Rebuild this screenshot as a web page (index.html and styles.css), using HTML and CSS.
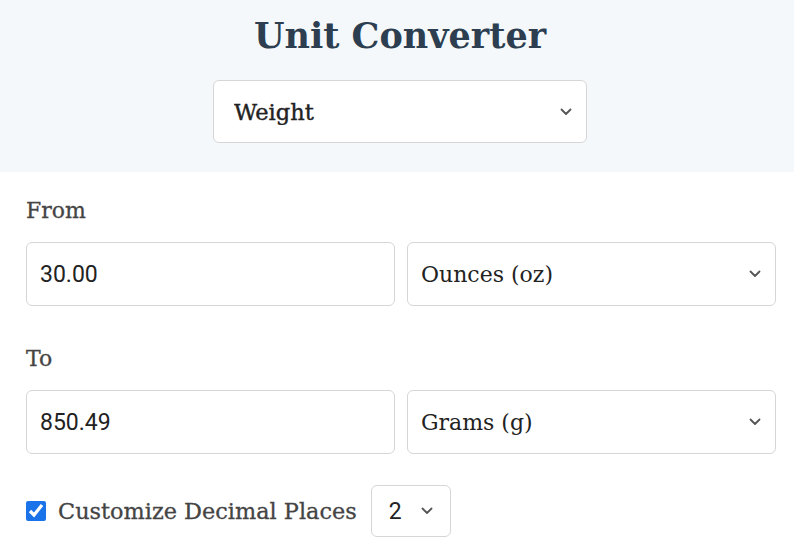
FILE: index.html
```html
<!DOCTYPE html>
<html lang="en">

    <head>
        <meta charset="UTF-8">
        <meta name="viewport" content="width=device-width, initial-scale=1.0">
        <title>Unit Converter</title>
        <link rel="stylesheet" href="styles.css">
    </head>

    <body>
        <div class="header">
            <h1>Unit Converter</h1>
            <div class="select-wrap category">
                <select class="field select">
                    <option>Weight</option>
                </select>
                <svg class="chevron" width="12" height="8" viewBox="0 0 12 8"><path d="M1.5 1.5 L6 6 L10.5 1.5" fill="none" stroke="#555" stroke-width="1.8" stroke-linecap="round" stroke-linejoin="round"/></svg>
            </div>
        </div>

        <div class="content">
            <label class="label">From</label>
            <div class="row">
                <input type="text" class="field number" value="30.00">
                <div class="select-wrap">
                    <select class="field select">
                        <option>Ounces (oz)</option>
                    </select>
                    <svg class="chevron" width="12" height="8" viewBox="0 0 12 8"><path d="M1.5 1.5 L6 6 L10.5 1.5" fill="none" stroke="#555" stroke-width="1.8" stroke-linecap="round" stroke-linejoin="round"/></svg>
                </div>
            </div>

            <label class="label">To</label>
            <div class="row">
                <input type="text" class="field number" value="850.49">
                <div class="select-wrap">
                    <select class="field select">
                        <option>Grams (g)</option>
                    </select>
                    <svg class="chevron" width="12" height="8" viewBox="0 0 12 8"><path d="M1.5 1.5 L6 6 L10.5 1.5" fill="none" stroke="#555" stroke-width="1.8" stroke-linecap="round" stroke-linejoin="round"/></svg>
                </div>
            </div>

            <div class="decimals">
                <input type="checkbox" id="custom" class="check" checked>
                <label for="custom" class="check-label">Customize Decimal Places</label>
                <div class="select-wrap small">
                    <select class="field select places">
                        <option>2</option>
                    </select>
                    <svg class="chevron" width="12" height="8" viewBox="0 0 12 8"><path d="M1.5 1.5 L6 6 L10.5 1.5" fill="none" stroke="#555" stroke-width="1.8" stroke-linecap="round" stroke-linejoin="round"/></svg>
                </div>
            </div>
        </div>
    </body>

</html>
```

FILE: styles.css
```css
body {
    margin: 0;
    font-family: "DejaVu Serif", serif;
    background: white;
    color: #222;
}

.header {
    background: #f5f8fb;
    height: 172px;
    display: flex;
    flex-direction: column;
    align-items: center;
    box-sizing: border-box;
    padding-top: 8px;
}

.header h1 {
    margin: 0 0 16px 0;
    font-size: 35px;
    font-weight: bold;
    color: #2c3e50;
    line-height: 56px;
    padding-left: 6px;
}

.select-wrap {
    position: relative;
    display: flex;
}

.select-wrap.category {
    width: 374px;
    margin-left: 6px;
}

.chevron {
    position: absolute;
    right: 15px;
    top: 50%;
    margin-top: -4px;
    pointer-events: none;
}

.field {
    box-sizing: border-box;
    height: 64px;
    border: 1px solid #d6d6d6;
    border-radius: 6px;
    background: white;
    font-size: 22px;
    color: #222;
    outline: none;
}

.select {
    appearance: none;
    -webkit-appearance: none;
    width: 100%;
    font-family: "DejaVu Serif", serif;
    padding: 0 40px 0 13px;
}

/* the category select and the labels are a little heavier */
.category .select {
    height: 63px;
    padding-left: 20px;
    font-size: 22.5px;
    -webkit-text-stroke: 0.4px #222;
}

.content {
    padding: 26px 18px 0 26px;
}

.label {
    display: block;
    font-size: 22px;
    color: #444;
    line-height: 26px;
    margin-bottom: 18px;
    -webkit-text-stroke: 0.3px #444;
}

.row {
    display: grid;
    grid-template-columns: 1fr 1fr;
    gap: 12px;
    margin-bottom: 40px;
}

.number {
    font-family: Roboto, sans-serif;
    font-size: 23px;
    padding: 0 13px;
    width: 100%;
}

.decimals {
    display: flex;
    align-items: center;
    margin-top: -9px;
}

.check {
    width: 20px;
    height: 20px;
    margin: 0 12px 0 0;
    accent-color: #1a73e8;
}

.check-label {
    font-size: 22.4px;
    color: #444;
    margin-right: 14px;
    -webkit-text-stroke: 0.3px #444;
}

.select-wrap.small {
    width: 80px;
}

.places {
    height: 52px;
    font-family: Roboto, sans-serif;
    font-size: 23px;
    padding-left: 17px;
}

.small .chevron {
    right: 18px;
}
```
